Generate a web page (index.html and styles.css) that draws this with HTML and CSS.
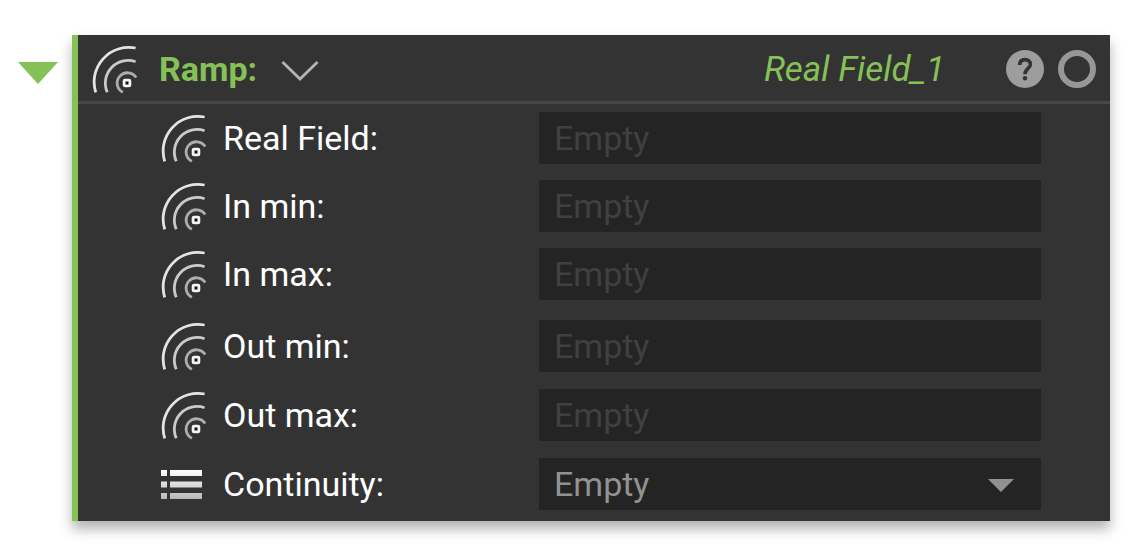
FILE: index.html
```html
<!DOCTYPE html>
<html lang="en">
<head>
<meta charset="utf-8">
<title>Ramp</title>
<link rel="stylesheet" href="styles.css">
</head>
<body>
<svg class="defs" aria-hidden="true">
  <defs>
    <linearGradient id="fade" x1="0" y1="0" x2="0" y2="1">
      <stop offset="0" stop-color="#ffffff"/>
      <stop offset="1" stop-color="#b8b8b8"/>
    </linearGradient>
    <symbol id="field" viewBox="0 0 46 52">
      <g fill="none" stroke-width="2.8">
        <path stroke="#e4e4e4" d="M3.7 49.3A34.7 34.7 0 0 1 43.6 5"/>
        <path stroke="#cacaca" d="M15.3 49.3A22.7 22.7 0 0 1 43.6 18.7"/>
        <path stroke="#adadad" d="M30.9 49.3A10.3 10.3 0 1 1 44.2 34.6"/>
      </g>
      <rect x="30.7" y="35.7" width="8.6" height="8.6" rx="2.4" fill="#f4f4f4"/>
      <rect x="33.5" y="38.5" width="3" height="3" fill="#111111"/>
    </symbol>
  </defs>
</svg>
<main class="node">
  <button class="collapse" type="button" aria-label="Collapse">
    <svg class="collapse-icon" viewBox="0 0 40 22"><path fill="#86c157" d="M0 0h40L20 22z"/></svg>
  </button>
  <section class="panel">
    <header class="header">
      <svg class="icon" aria-hidden="true"><use href="#field"/></svg>
      <h1 class="title">Ramp:</h1>
      <button class="expand" type="button" aria-label="Choose overload">
        <svg class="expand-icon" viewBox="0 0 38 24"><path fill="none" stroke="#b4b4b4" stroke-width="2.8" d="M1.500 5L19 22 36.500 5"/></svg>
      </button>
      <span class="name">Real Field_1</span>
      <button class="round" type="button" aria-label="Help">
        <svg class="round-icon" viewBox="0 0 38 38">
          <circle cx="19" cy="19" r="19" fill="#9d9d9d"/>
          <path fill="none" stroke="#333333" stroke-width="3.6" d="M13.700 15C13.700 11.400 15.800 9.600 19 9.600S24.400 11.600 24.400 14.400C24.400 18.400 19 18.600 19 24.300"/>
          <circle cx="19" cy="28.200" r="2.200" fill="#333333"/>
        </svg>
      </button>
      <button class="round" type="button" aria-label="Output">
        <svg class="round-icon" viewBox="0 0 38 38"><circle cx="19" cy="19" r="16" fill="none" stroke="#979797" stroke-width="6"/></svg>
      </button>
    </header>
    <form class="body">
      <div class="group group-in">
        <div class="row">
          <svg class="icon" aria-hidden="true"><use href="#field"/></svg>
          <label class="label" for="real-field">Real Field:</label>
          <input class="input" id="real-field" type="text" placeholder="Empty">
        </div>
        <div class="row">
          <svg class="icon" aria-hidden="true"><use href="#field"/></svg>
          <label class="label" for="in-min">In min:</label>
          <input class="input" id="in-min" type="text" placeholder="Empty">
        </div>
        <div class="row">
          <svg class="icon" aria-hidden="true"><use href="#field"/></svg>
          <label class="label" for="in-max">In max:</label>
          <input class="input" id="in-max" type="text" placeholder="Empty">
        </div>
      </div>
      <div class="group group-out">
        <div class="row">
          <svg class="icon" aria-hidden="true"><use href="#field"/></svg>
          <label class="label" for="out-min">Out min:</label>
          <input class="input" id="out-min" type="text" placeholder="Empty">
        </div>
        <div class="row">
          <svg class="icon" aria-hidden="true"><use href="#field"/></svg>
          <label class="label" for="out-max">Out max:</label>
          <input class="input" id="out-max" type="text" placeholder="Empty">
        </div>
        <div class="row">
          <svg class="icon" viewBox="0 0 46 52" aria-hidden="true">
            <path fill="url(#fade)" d="M0 12h6v6H0zM9 12h32v6H9zM0 23.500h6v6H0zM9 23.500h32v6H9zM0 35h6v6H0zM9 35h32v6H9z"/>
          </svg>
          <label class="label" for="continuity">Continuity:</label>
          <div class="select-box">
            <select class="input select" id="continuity"><option>Empty</option></select>
            <svg class="select-arrow" viewBox="0 0 26 13" aria-hidden="true"><path fill="#919191" d="M0 0h26L13 13z"/></svg>
          </div>
        </div>
      </div>
    </form>
  </section>
</main>
</body>
</html>
```
FILE: styles.css
```css
* {
  box-sizing: border-box;
}

body {
  margin: 0;
  background: #ffffff;
  color: #ffffff;
  font-family: Roboto, sans-serif;
  font-size: 34px;
  line-height: 48px;
}

button {
  display: flex;
  padding: 0;
  border: 0;
  background: none;
  cursor: pointer;
}

.defs {
  position: absolute;
  width: 0;
  height: 0;
}

.node {
  display: flex;
  align-items: flex-start;
  gap: 14px;
  padding: 35px 35px 32px 18px;
}

.collapse {
  padding-top: 27px;
}

.collapse-icon {
  width: 40px;
  height: 22px;
}

.panel {
  flex: 1;
  min-width: 0;
  border-left: 6px solid #86c157;
  background: #333333;
  box-shadow: 0 8px 12px rgba(0, 0, 0, 0.3);
}

.header {
  display: flex;
  align-items: center;
  padding: 8px 14px 6px;
  border-bottom: 3px solid #474747;
}

.icon {
  display: block;
  flex: none;
  width: 46px;
  height: 52px;
}

.title {
  margin: 0 24px 0 21px;
  color: #86c157;
  font-size: 34px;
  font-weight: 700;
}

.expand-icon {
  width: 38px;
  height: 24px;
}

.name {
  margin-left: auto;
  margin-right: 61px;
  padding-top: 2px;
  color: #86c157;
  font-size: 35px;
  font-style: italic;
}

.round + .round {
  margin-left: 14px;
}

.round-icon {
  width: 38px;
  height: 38px;
}

.body {
  display: flex;
  flex-direction: column;
  gap: 20px;
  padding: 8px 69px 11px 83px;
}

.group {
  display: flex;
  flex-direction: column;
}

.group-in {
  gap: 16px;
}

.group-out {
  gap: 17px;
}

.row {
  display: grid;
  grid-template-columns: 62px 316px 1fr;
  align-items: center;
}

.input {
  display: block;
  width: 100%;
  height: 52px;
  margin: 0;
  padding: 0 15px;
  border: 0;
  border-radius: 0;
  background: #242424;
  color: #929292;
  font: inherit;
}

.input::placeholder {
  color: #404040;
  opacity: 1;
}

.select-box {
  position: relative;
}

.select {
  appearance: none;
}

.select-arrow {
  position: absolute;
  top: 21px;
  right: 27px;
  width: 26px;
  height: 13px;
  pointer-events: none;
}
```
